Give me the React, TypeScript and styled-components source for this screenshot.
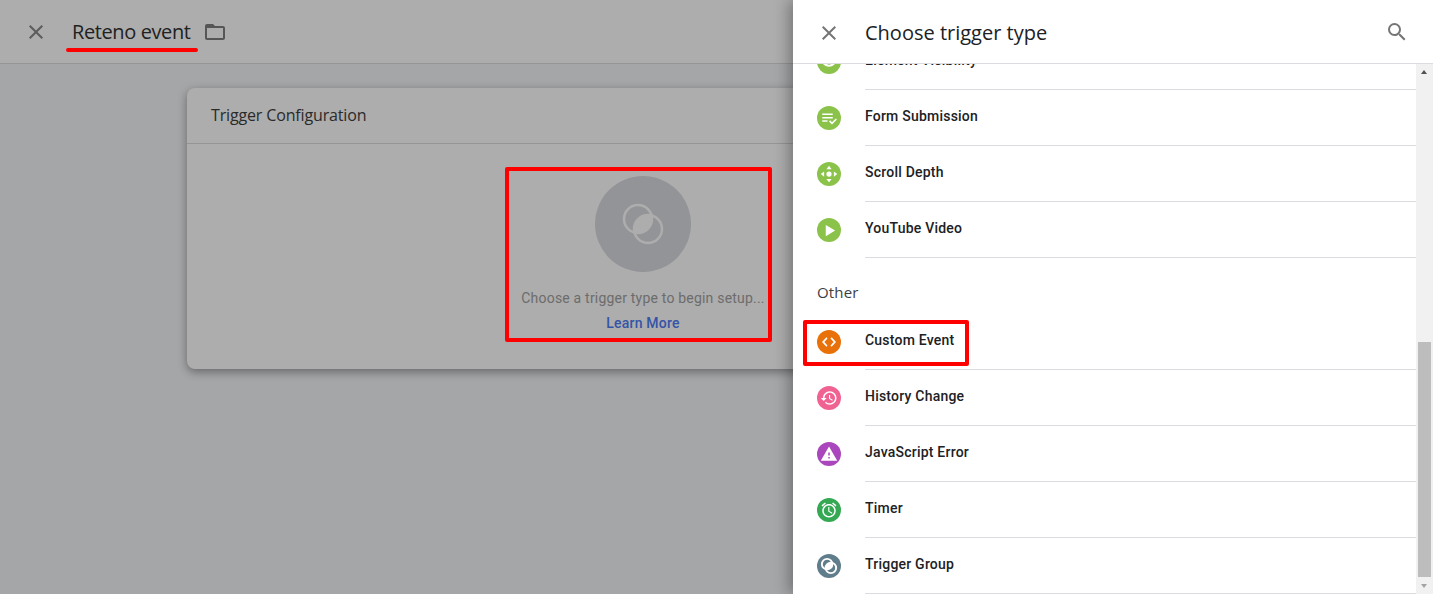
import React, { ReactNode } from 'react';
import styled, { createGlobalStyle } from 'styled-components';

const Global = createGlobalStyle`
  html, body {
    margin: 0;
    height: 100%;
    overflow: hidden;
    background: #a5a6a8;
    font-family: Roboto, "Liberation Sans", sans-serif;
  }
  #root {
    height: 100%;
  }
`;

const Page = styled.div`
  position: relative;
  width: 1433px;
  height: 594px;
  overflow: hidden;
  background: #a5a6a8;
`;

const TopBar = styled.header`
  display: flex;
  align-items: center;
  box-sizing: border-box;
  height: 64px;
  padding-left: 24px;
  background: #adadad;
  border-bottom: 1px solid #959595;
`;

const CloseButton = styled.span<{ $color: string }>`
  display: flex;
  width: 24px;
  height: 24px;
  margin-right: 24px;
  color: ${(p) => p.$color};
`;

const PageTitle = styled.h1`
  margin: 0 12px 0 0;
  font-family: "Open Sans", Roboto, sans-serif;
  font-size: 20px;
  font-weight: 400;
  letter-spacing: -0.4px;
  color: #212121;
`;

const FolderIcon = styled.span`
  display: flex;
  margin-left: 1px;
  color: #565656;
`;

const Content = styled.main`
  padding: 24px 0 0 187px;
`;

const Card = styled.section`
  width: 912px;
  height: 281px;
  border-radius: 8px;
  background: #adadad;
  box-shadow: 0 3px 10px rgba(0, 0, 0, 0.38);
`;

const CardTitle = styled.div`
  box-sizing: border-box;
  height: 56px;
  padding: 16px 24px 0;
  font-family: "Open Sans", Roboto, sans-serif;
  font-size: 16px;
  letter-spacing: -0.15px;
  color: #2a2a2a;
  border-bottom: 1px solid #959595;
`;

const CardBody = styled.div`
  display: flex;
  flex-direction: column;
  align-items: center;
  padding-top: 32px;
`;

const TypeCircle = styled.div`
  display: flex;
  align-items: center;
  justify-content: center;
  width: 96px;
  height: 96px;
  border-radius: 50%;
  background: #939497;
  color: #adadad;
`;

const Hint = styled.div`
  margin-top: 16px;
  font-size: 14px;
  line-height: 20px;
  letter-spacing: 0.2px;
  color: #6c6c6c;
`;

const LearnMore = styled.a`
  margin-top: 5px;
  font-size: 14px;
  font-weight: 500;
  line-height: 20px;
  letter-spacing: 0.22px;
  color: #3454a8;
`;

const Drawer = styled.aside`
  position: absolute;
  top: 0;
  right: 0;
  bottom: 0;
  display: flex;
  flex-direction: column;
  width: 640px;
  background: #fff;
  box-shadow: -4px 0 14px rgba(0, 0, 0, 0.32);
`;

const DrawerBar = styled.header`
  display: flex;
  align-items: center;
  flex: none;
  box-sizing: border-box;
  height: 64px;
  padding: 2px 24px 0;
  border-bottom: 1px solid #dadce0;
`;

const DrawerTitle = styled.h2`
  flex: 1;
  margin: 0;
  font-family: "Open Sans", Roboto, sans-serif;
  font-size: 20px;
  font-weight: 400;
  letter-spacing: 0;
  color: #202124;
`;

const SearchIcon = styled.span`
  display: flex;
  margin-top: -2px;
  color: #757575;
`;

const ListArea = styled.div`
  flex: 1;
  overflow: hidden;
  padding-right: 17px;
`;

const List = styled.ul`
  margin: -30px 0 0;
  padding: 0;
  list-style: none;
`;

const Row = styled.li`
  display: flex;
  align-items: center;
  height: 56px;
  padding-left: 24px;
`;

const Badge = styled.span<{ $bg: string }>`
  display: flex;
  flex: none;
  align-items: center;
  justify-content: center;
  width: 24px;
  height: 24px;
  border-radius: 50%;
  background: ${(p) => p.$bg};
  color: #fff;
`;

const RowLabel = styled.span`
  display: flex;
  align-items: center;
  align-self: stretch;
  flex: 1;
  box-sizing: border-box;
  margin-left: 24px;
  padding-bottom: 4px;
  font-size: 14px;
  font-weight: 500;
  letter-spacing: 0.22px;
  color: #202124;
  border-bottom: 1px solid #dadce0;
`;

const Section = styled.li`
  box-sizing: border-box;
  height: 56px;
  padding: 24px 0 0 24px;
  font-family: "Open Sans", Roboto, sans-serif;
  font-size: 15px;
  line-height: 20px;
  letter-spacing: 0.15px;
  color: #3c4043;
`;

const Scrollbar = styled.div`
  position: absolute;
  top: 64px;
  right: 0;
  bottom: 0;
  width: 17px;
  background: #f1f1f1;
`;

const ScrollArrow = styled.span<{ $dir: 'up' | 'down'; $color: string }>`
  position: absolute;
  left: 5px;
  ${(p) => (p.$dir === 'up' ? 'top: 6px;' : 'bottom: 6px;')}
  width: 0;
  height: 0;
  border-left: 3.5px solid transparent;
  border-right: 3.5px solid transparent;
  ${(p) => (p.$dir === 'up' ? 'border-bottom' : 'border-top')}: 4px solid ${(p) => p.$color};
`;

const ScrollThumb = styled.div`
  position: absolute;
  top: 278px;
  left: 2px;
  width: 13px;
  height: 235px;
  background: #bdbdbd;
`;

const Underline = styled.div`
  position: absolute;
  left: 66px;
  top: 48px;
  width: 132px;
  height: 4px;
  border-radius: 2px;
  background: #f00;
`;

const Mark = styled.div<{ $x: number; $y: number; $w: number; $h: number }>`
  position: absolute;
  box-sizing: border-box;
  left: ${(p) => p.$x}px;
  top: ${(p) => p.$y}px;
  width: ${(p) => p.$w}px;
  height: ${(p) => p.$h}px;
  border: 4px solid #f00;
  border-radius: 2px;
`;

const Icon = ({ size = 16, children }: { size?: number; children: ReactNode }) => (
  <svg width={size} height={size} viewBox="0 0 24 24" fill="currentColor">
    {children}
  </svg>
);

const closePath = 'M19 6.41 17.59 5 12 10.59 6.41 5 5 6.41 10.59 12 5 17.59 6.41 19 12 13.41 17.59 19 19 17.59 13.41 12z';

// two overlapping rings with the shared part filled in
const TriggerGroup = ({ size, stroke }: { size: number; stroke: number }) => (
  <svg width={size} height={size} viewBox="0 0 48 48" fill="none" stroke="currentColor" strokeWidth={stroke}>
    <circle cx="19" cy="19" r="14" />
    <circle cx="29" cy="29" r="14" />
    <path d="M15.46 32.54A14 14 0 0 1 32.54 15.46 14 14 0 0 1 15.46 32.54Z" fill="currentColor" stroke="none" />
  </svg>
);

type Item = { label: string; color: string; icon: ReactNode };

const eye = (
  <Icon>
    <path d="M12 5C7 5 2.7 8.1 1 12c1.7 3.9 6 7 11 7s9.3-3.1 11-7c-1.7-3.9-6-7-11-7zm0 11a4 4 0 1 1 0-8 4 4 0 0 1 0 8z" />
  </Icon>
);

const formIcon = (
  <Icon size={18}>
    <path d="M3 6h14v2H3zM3 10.5h14v2H3zM3 15h7v2H3z" />
    <path d="M12 16.5l1.5-1.5 2.5 2.5 5-5 1.5 1.5-6.5 6.5z" />
  </Icon>
);

const scrollIcon = (
  <Icon size={18}>
    <circle cx="12" cy="12" r="3.5" />
    <path d="M12 1 15.5 5.500h-7zM12 23 8.500 18.500h7zM1 12 5.500 8.500v7zM23 12 18.500 15.500v-7z" />
  </Icon>
);

const playIcon = (
  <Icon size={15}>
    <path d="M6 3v18l15-9z" />
  </Icon>
);

const codeIcon = (
  <Icon size={16}>
    <path d="M9.8 17.2 5 12l4.800-5.200L8 5l-6.500 7L8 19l1.800-1.800zm4.400 0L19 12l-4.800-5.200L16 5l6.500 7-6.500 7-1.800-1.800z" />
  </Icon>
);

const historyIcon = (
  <Icon size={18}>
    <path d="M13 3c-4.97 0-9 4.03-9 9H1l3.89 3.89.07.14L9 12H6c0-3.87 3.13-7 7-7s7 3.13 7 7-3.13 7-7 7c-1.93 0-3.68-.79-4.94-2.06l-1.42 1.42C8.27 19.99 10.51 21 13 21c4.97 0 9-4.03 9-9s-4.03-9-9-9zm-1 5v5l4.28 2.54.72-1.21-3.5-2.08V8H12z" />
  </Icon>
);

const errorIcon = (
  <Icon size={18}>
    <path d="M1 21h22L12 2 1 21zm12-3h-2v-2h2v2zm0-4h-2v-4h2v4z" />
  </Icon>
);

const timerIcon = (
  <Icon size={18}>
    <path d="M22 5.72l-4.6-3.86-1.29 1.53 4.6 3.86L22 5.72zM7.88 3.39L6.6 1.86 2 5.71l1.29 1.53 4.59-3.85zM12.5 8H11v6l4.75 2.85.75-1.23-4-2.37V8zM12 4c-4.97 0-9 4.03-9 9s4.02 9 9 9c4.97 0 9-4.03 9-9s-4.03-9-9-9zm0 16c-3.87 0-7-3.13-7-7s3.13-7 7-7 7 3.13 7 7-3.13 7-7 7z" />
  </Icon>
);

const green = '#8bc34a';

const engagement: Item[] = [
  { label: 'Element Visibility', color: green, icon: eye },
  { label: 'Form Submission', color: green, icon: formIcon },
  { label: 'Scroll Depth', color: green, icon: scrollIcon },
  { label: 'YouTube Video', color: green, icon: playIcon },
];

const other: Item[] = [
  { label: 'Custom Event', color: '#e8710a', icon: codeIcon },
  { label: 'History Change', color: '#f06292', icon: historyIcon },
  { label: 'JavaScript Error', color: '#ab47bc', icon: errorIcon },
  { label: 'Timer', color: '#34a853', icon: timerIcon },
  { label: 'Trigger Group', color: '#607d8b', icon: <TriggerGroup size={18} stroke={5} /> },
];

const TriggerRow = ({ item }: { item: Item }) => (
  <Row>
    <Badge $bg={item.color}>{item.icon}</Badge>
    <RowLabel>{item.label}</RowLabel>
  </Row>
);

const App = () => (
  <Page>
    <Global />
    <TopBar>
      <CloseButton $color="#5c5c5c">
        <Icon size={24}>
          <path d={closePath} />
        </Icon>
      </CloseButton>
      <PageTitle>Reteno event</PageTitle>
      <FolderIcon>
        <Icon size={24}>
          <path d="M20 6h-8l-2-2H4c-1.1 0-2 .9-2 2v12c0 1.1.9 2 2 2h16c1.1 0 2-.9 2-2V8c0-1.1-.9-2-2-2zm0 12H4V8h16v10z" />
        </Icon>
      </FolderIcon>
    </TopBar>
    <Content>
      <Card>
        <CardTitle>Trigger Configuration</CardTitle>
        <CardBody>
          <TypeCircle>
            <TriggerGroup size={48} stroke={2.5} />
          </TypeCircle>
          <Hint>Choose a trigger type to begin setup...</Hint>
          <LearnMore>Learn More</LearnMore>
        </CardBody>
      </Card>
    </Content>
    <Underline />
    <Mark $x={505} $y={167} $w={267} $h={175} />
    <Drawer>
      <DrawerBar>
        <CloseButton $color="#757575">
          <Icon size={24}>
            <path d={closePath} />
          </Icon>
        </CloseButton>
        <DrawerTitle>Choose trigger type</DrawerTitle>
        <SearchIcon>
          <Icon size={24}>
            <path d="M15.5 14h-.79l-.28-.27A6.47 6.47 0 0 0 16 9.5 6.5 6.5 0 1 0 9.5 16c1.61 0 3.09-.59 4.23-1.57l.27.28v.79l5 4.99L20.49 19l-4.99-5zm-6 0C7.01 14 5 11.99 5 9.5S7.01 5 9.5 5 14 7.01 14 9.5 11.99 14 9.5 14z" />
          </Icon>
        </SearchIcon>
      </DrawerBar>
      <ListArea>
        <List>
          {engagement.map((item) => (
            <TriggerRow key={item.label} item={item} />
          ))}
          <Section>Other</Section>
          {other.map((item) => (
            <TriggerRow key={item.label} item={item} />
          ))}
        </List>
      </ListArea>
      <Scrollbar>
        <ScrollArrow $dir="up" $color="#505050" />
        <ScrollThumb />
        <ScrollArrow $dir="down" $color="#a3a3a3" />
      </Scrollbar>
    </Drawer>
    <Mark $x={803} $y={320} $w={166} $h={46} />
  </Page>
);

export default App;
